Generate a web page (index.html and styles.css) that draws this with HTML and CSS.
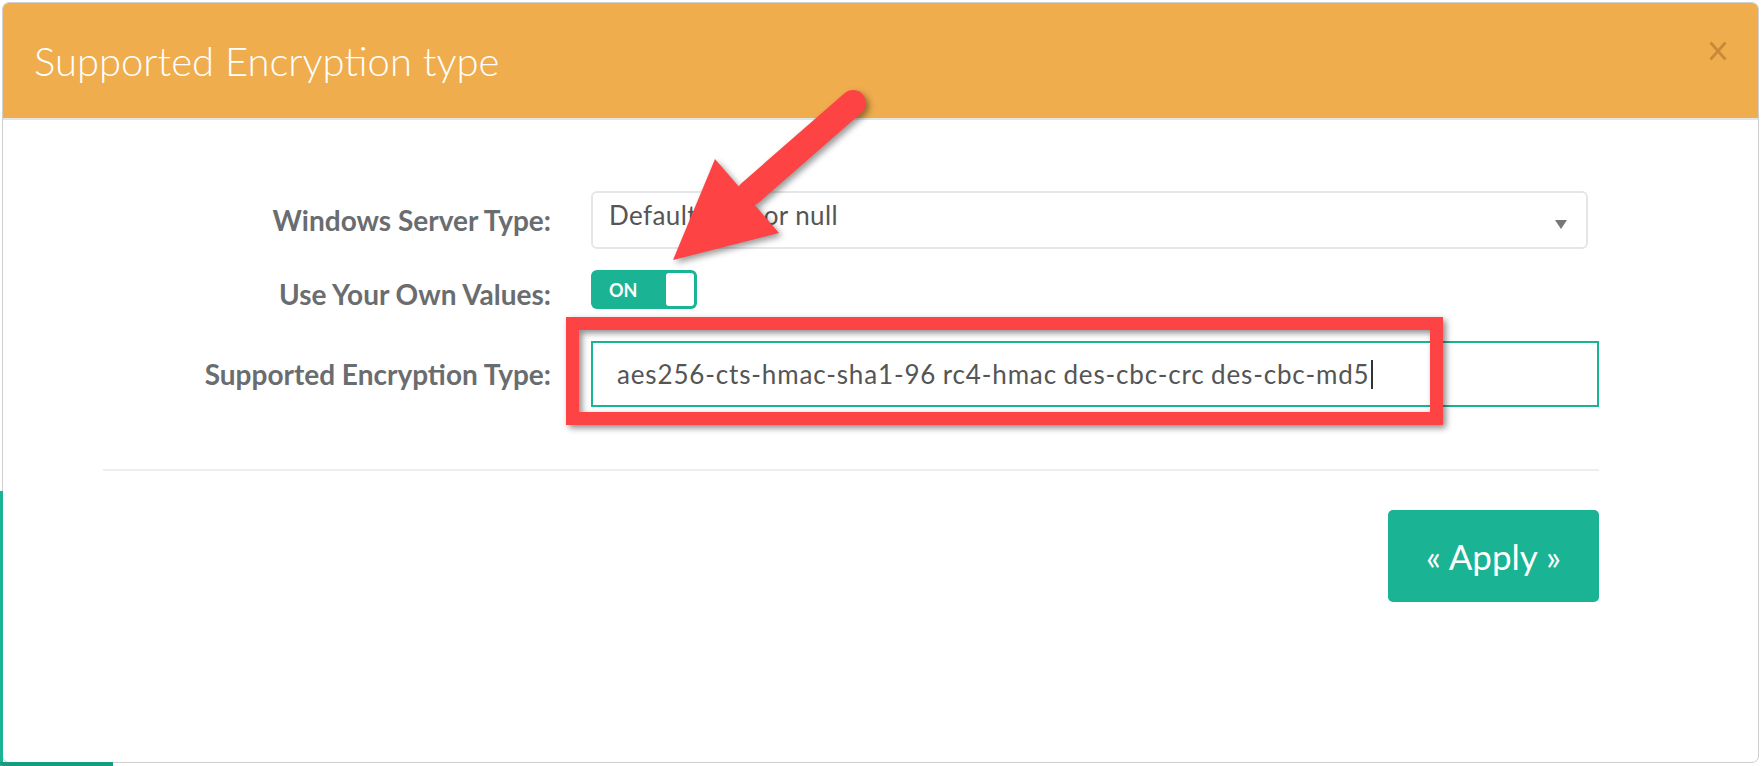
FILE: index.html
```html
<!DOCTYPE html>
<html>
<head>
<meta charset="utf-8">
<link rel="stylesheet" href="styles.css">
</head>
<body>
<div class="bg-edge-left"></div>
<div class="bg-edge-bottom"></div>
<div class="modal">
  <div class="modal-header">
    <h1 class="modal-title">Supported Encryption type</h1>
    <svg class="close" width="18" height="20" viewBox="0 0 18 20"><path d="M1.5 1.5 L16.5 18.5 M16.5 1.5 L1.5 18.5" stroke="#c98a38" stroke-width="2.8" fill="none"/></svg>
  </div>
  <div class="modal-body">
    <div class="form-row row-select">
      <label class="form-label">Windows Server Type:</label>
      <div class="select">
        <span class="select-text">Default type or null</span>
        <svg class="select-arrow" width="12" height="9" viewBox="0 0 12 9"><polygon points="0,0 12,0 6,9" fill="#777"/></svg>
      </div>
    </div>
    <div class="form-row row-toggle">
      <label class="form-label label-low">Use Your Own Values:</label>
      <div class="toggle">
        <span class="toggle-text">ON</span>
        <span class="toggle-knob"></span>
      </div>
    </div>
    <div class="form-row">
      <label class="form-label">Supported Encryption Type:</label>
      <div class="text-input">
        <span class="input-value">aes256-cts-hmac-sha1-96 rc4-hmac des-cbc-crc des-cbc-md5</span><span class="caret"></span>
      </div>
    </div>
    <div class="divider"></div>
    <div class="actions">
      <button class="btn-apply">« Apply »</button>
    </div>
  </div>
</div>
<div class="highlight-box"></div>
<svg class="callout-arrow" width="240" height="220" viewBox="0 0 240 220">
  <line x1="213" y1="33" x2="110" y2="123" stroke="#fe4345" stroke-width="26" stroke-linecap="round"/>
  <polygon points="33,190 75,89 139,163" fill="#fe4345"/>
</svg>
</body>
</html>
```

FILE: styles.css
```css
html, body {
  margin: 0;
  padding: 0;
}
body {
  width: 1764px;
  height: 766px;
  overflow: hidden;
  position: relative;
  background: #ffffff;
  font-family: Lato, "Open Sans", "Liberation Sans", sans-serif;
}
.modal {
  margin: 2px 0 0 2px;
  width: 1757px;
  height: 761px;
  box-sizing: border-box;
  border: 1px solid #cfcfcf;
  border-radius: 7px;
  overflow: hidden;
  background: #ffffff;
}
.modal-header {
  height: 115px;
  background: #efad4e;
  border-bottom: 2px solid #e4e4e4;
  display: flex;
  align-items: center;
  justify-content: space-between;
  padding: 0 31px 0 31px;
}
.modal-title {
  margin: 0;
  font-size: 40px;
  font-weight: 300;
  line-height: 1;
  color: #ffffff;
}
.close {
  display: block;
  align-self: flex-start;
  margin-top: 38px;
}
.modal-body {
  padding: 71px 0 0 100px;
}
.form-row {
  display: grid;
  grid-template-columns: 448px 1008px;
  column-gap: 40px;
  align-items: center;
}
.row-select {
  margin-bottom: 21px;
}
.row-toggle {
  margin-bottom: 32px;
}
.form-label {
  text-align: right;
  font-size: 28px;
  font-weight: 700;
  line-height: 1;
  color: #6a6d6f;
}
.label-low {
  padding-top: 8px;
}
.select {
  width: 997px;
  height: 58px;
  box-sizing: border-box;
  border: 2px solid #e5e6e7;
  border-radius: 6px;
  display: flex;
  align-items: flex-start;
  justify-content: space-between;
  padding: 9px 19px 0 16px;
}
.select-text {
  font-size: 26px;
  line-height: 1;
  letter-spacing: 0.4px;
  color: #555555;
}
.select-arrow {
  display: block;
  margin-top: 18px;
}
.toggle {
  width: 106px;
  height: 39px;
  box-sizing: border-box;
  background: #1ab394;
  border-radius: 6px;
  display: flex;
  align-items: center;
  justify-content: space-between;
  padding: 3px;
}
.toggle-text {
  margin-left: 15px;
  font-size: 18px;
  font-weight: 700;
  color: #ffffff;
  line-height: 1;
}
.toggle-knob {
  width: 28px;
  height: 33px;
  background: #ffffff;
  border-radius: 3px;
}
.text-input {
  width: 1008px;
  height: 66px;
  box-sizing: border-box;
  border: 2px solid #1ab394;
  display: flex;
  align-items: center;
  padding-left: 24px;
}
.input-value {
  font-size: 26px;
  line-height: 1;
  letter-spacing: 0.85px;
  word-spacing: -1px;
  color: #555555;
  white-space: pre;
}
.caret {
  width: 2px;
  height: 29px;
  background: #333333;
  margin-left: 1px;
}
.divider {
  margin-top: 62px;
  width: 1496px;
  height: 2px;
  background: #eeeeee;
}
.actions {
  width: 1496px;
  display: flex;
  justify-content: flex-end;
  margin-top: 39px;
}
.btn-apply {
  width: 211px;
  height: 92px;
  border: none;
  border-radius: 5px;
  background: #1ab394;
  color: #ffffff;
  font-family: Lato, "Open Sans", "Liberation Sans", sans-serif;
  font-size: 35px;
  line-height: 1;
  padding: 0;
}
.highlight-box {
  position: absolute;
  left: 566px;
  top: 317px;
  width: 877px;
  height: 108px;
  box-sizing: border-box;
  border: 13px solid #fe4345;
  filter: drop-shadow(3px 3px 3px rgba(0, 0, 0, 0.45));
}
.callout-arrow {
  position: absolute;
  left: 640px;
  top: 70px;
  filter: drop-shadow(3px 3px 3px rgba(0, 0, 0, 0.4));
}
.bg-edge-left {
  position: absolute;
  left: 0;
  top: 491px;
  width: 3px;
  height: 275px;
  background: #1ab394;
  z-index: 2;
}
.bg-edge-bottom {
  position: absolute;
  left: 0;
  top: 762px;
  width: 113px;
  height: 4px;
  background: #169c80;
  border-bottom-left-radius: 4px;
  z-index: 2;
}
```
